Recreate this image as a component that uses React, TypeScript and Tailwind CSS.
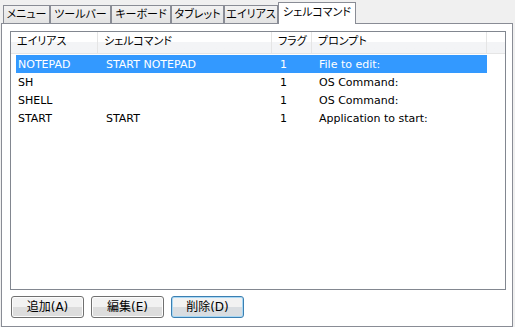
import React from "react";

const tabs = [
  { text: "メニュー", w: "w-[47px]" },
  { text: "ツールバー", w: "w-[61px]" },
  { text: "キーボード", w: "w-[60px]" },
  { text: "タブレット", w: "w-[53px]" },
  { text: "エイリアス", w: "w-[54px]" },
];

const rows = [
  { alias: "NOTEPAD", cmd: "START NOTEPAD", flag: "1", prompt: "File to edit:" },
  { alias: "SH", cmd: "", flag: "1", prompt: "OS Command:" },
  { alias: "SHELL", cmd: "", flag: "1", prompt: "OS Command:" },
  { alias: "START", cmd: "START", flag: "1", prompt: "Application to start:" },
];

const Button = ({ label, active }: { label: string; active?: boolean }) => (
  <button
    className={`w-[73px] h-[22px] rounded-[3px] border text-[12px] text-black flex items-center justify-center ${
      active
        ? "border-[#3c7fb1] bg-linear-to-b from-[#f2f2f2] from-50% to-[#d9dde1] to-50% shadow-[inset_0_0_0_1px_#a8d8f5]"
        : "border-[#707070] bg-linear-to-b from-[#f2f2f2] from-50% to-[#dddddd] to-50% shadow-[inset_0_0_0_1px_#fcfcfc]"
    }`}
  >
    {label}
  </button>
);

export default function App() {
  return (
    <div className="w-[515px] h-[327px] bg-[#f0f0f0] pt-[2px] pl-[1px] font-['DejaVu_Sans','Noto_Sans_CJK_JP',sans-serif] [font-feature-settings:'palt'] text-[11px] text-black overflow-hidden">
      <div className="relative z-10 flex items-end h-[21px] pl-[2px]">
        {tabs.map((t, i) => (
          <div
            key={i}
            className={`${t.w} h-[18px] border border-b-0 border-[#898c95] bg-linear-to-b from-[#f2f2f2] to-[#e3e3e3] flex items-center justify-center text-[11px] leading-none`}
          >
            {t.text}
          </div>
        ))}
        <div className="w-[78px] h-[22px] -mb-[1px] border border-b-0 border-[#898c95] bg-white flex items-center justify-center text-[11px] leading-none pb-[2px]">
          シェルコマンド
        </div>
      </div>
      <div className="w-[512px] h-[304px] border border-[#898c95] bg-white pt-[7px] pl-[8px] pr-[6px] flex flex-col">
        <div className="h-[259px] border border-[#828790] bg-white flex flex-col">
          <div className="h-[22px] flex border-b border-[#e5e5e5] bg-linear-to-b from-white from-50% to-[#f3f4f6] to-50% text-[11px]">
            <div className="w-[87px] pl-[6px] border-r border-[#e5e5e5] flex items-center">エイリアス</div>
            <div className="w-[174px] pl-[6px] border-r border-[#e5e5e5] flex items-center">シェルコマンド</div>
            <div className="w-[40px] pl-[6px] border-r border-[#e5e5e5] flex items-center">フラグ</div>
            <div className="w-[175px] pl-[6px] border-r border-[#e5e5e5] flex items-center">プロンプト</div>
            <div className="flex-1" />
          </div>
          <div className="flex flex-col pt-[1px] pl-[5px]">
            {rows.map((r, i) => (
              <div
                key={i}
                className={`w-[471px] h-[18px] pt-[3px] flex items-center ${
                  i === 0 ? "bg-[#3399ff] text-white" : "text-black"
                }`}
              >
                <div className="w-[82px] pl-[2px]">{r.alias}</div>
                <div className="w-[174px] pl-[8px]">{r.cmd}</div>
                <div className="w-[40px] pl-[8px]">{r.flag}</div>
                <div className="flex-1 pl-[7px]">{r.prompt}</div>
              </div>
            ))}
          </div>
        </div>
        <div className="flex gap-[7px] pl-[1px] mt-[6px]">
          <Button label="追加(A)" />
          <Button label="編集(E)" />
          <Button label="削除(D)" active />
        </div>
      </div>
    </div>
  );
}
